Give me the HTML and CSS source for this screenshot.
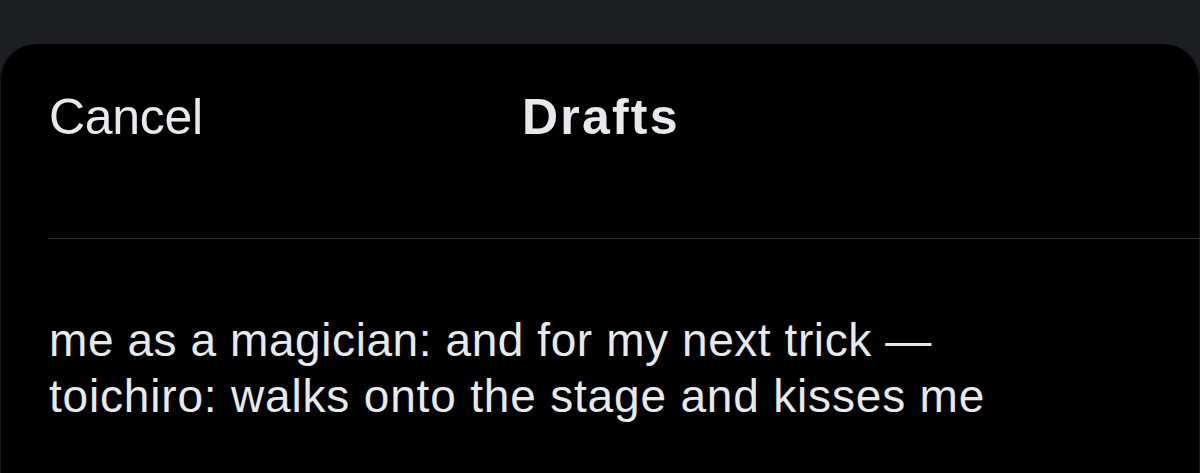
FILE: index.html
```html
<!DOCTYPE html>
<html>
<head>
<meta charset="utf-8">
<link rel="stylesheet" href="styles.css">
</head>
<body>
<div class="backdrop"></div>
<div class="sheet">
  <div class="header">
    <span class="cancel">Cancel</span>
    <span class="title">Drafts</span>
  </div>
  <div class="divider"></div>
  <div class="draft">
    <p><span class="line1">me as a magician: and for my next trick —</span><br><span class="line2">toichiro: walks onto the stage and kisses me</span></p>
  </div>
</div>
</body>
</html>
```
FILE: styles.css
```css
html, body {
  margin: 0;
  padding: 0;
  background: #1c1e21;
  width: 1200px;
  height: 473px;
  overflow: hidden;
  font-family: "Liberation Sans", Arial, sans-serif;
  color: #e7e9ea;
}
.backdrop {
  height: 44px;
}
.sheet {
  background: #000;
  border-radius: 36px 36px 0 0;
  height: 429px;
  box-shadow: inset 1px 0 0 #1a1a1a, inset -1px 0 0 #1a1a1a;
}
.header {
  display: flex;
  align-items: flex-start;
  height: 194px;
  box-sizing: border-box;
  padding: 44px 0 0 49px;
  font-size: 50px;
  line-height: 58px;
}
.cancel {
  width: 473px;
  letter-spacing: -0.3px;
}
.title {
  font-weight: bold;
  letter-spacing: 2.2px;
}
.divider {
  margin-left: 48px;
  height: 1px;
  background: #2f3336;
}
.draft {
  padding-left: 49px;
}
.draft p {
  margin: 0;
  padding-top: 73px;
  font-size: 46px;
  line-height: 56px;
}
.line1 {
  letter-spacing: 0.58px;
}
.line2 {
  letter-spacing: 0.82px;
}
```
